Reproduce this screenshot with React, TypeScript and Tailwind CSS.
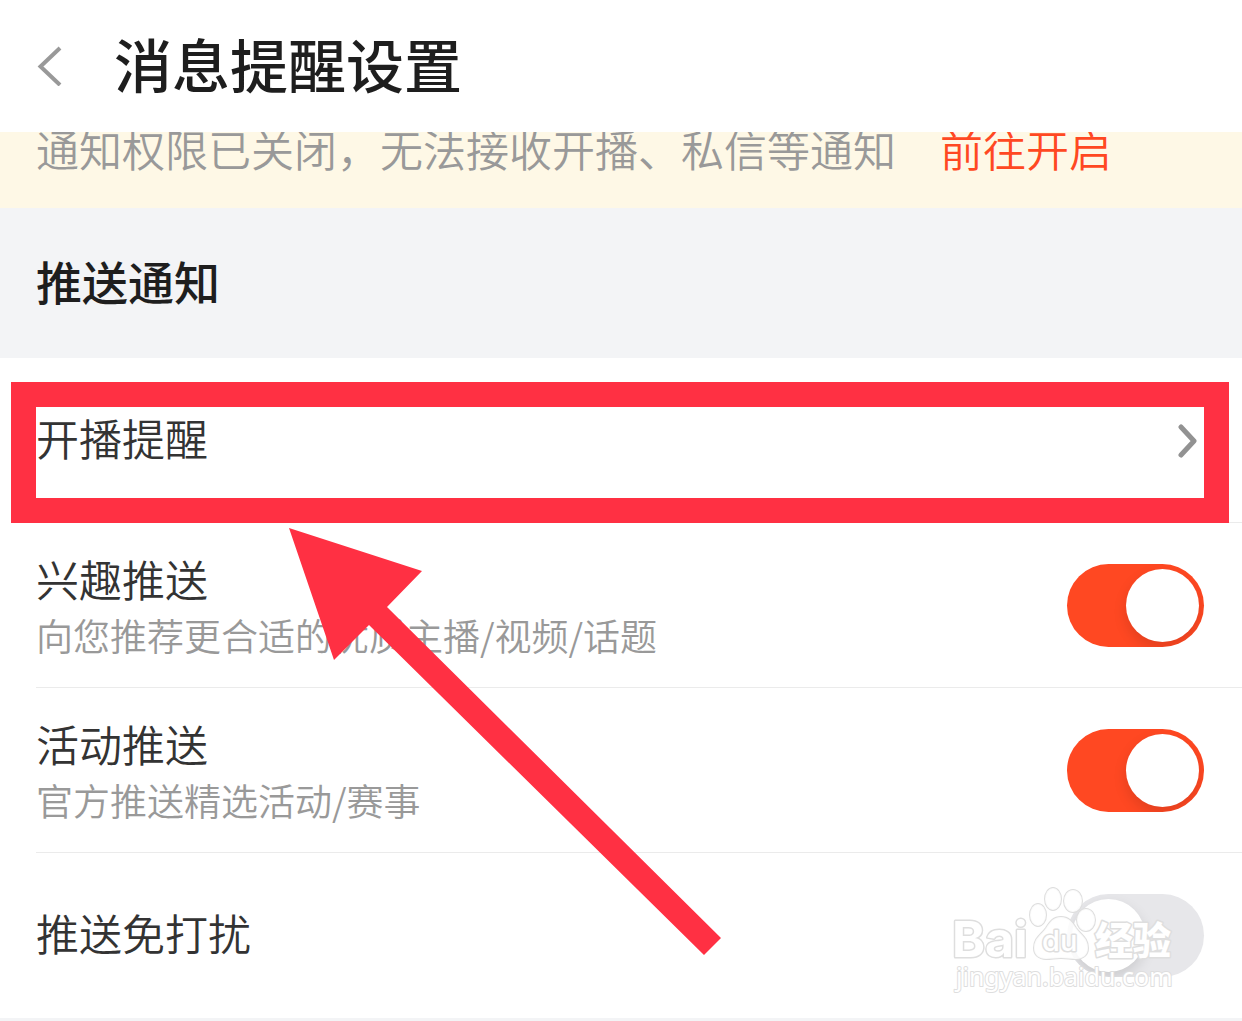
import { useState } from 'react';

interface PushSetting {
    id: string;
    title: string;
    desc?: string;
    enabled: boolean;
}

const initialSettings: PushSetting[] = [
    { id: 'interest', title: '兴趣推送', desc: '向您推荐更合适的优质主播/视频/话题', enabled: true },
    { id: 'activity', title: '活动推送', desc: '官方推送精选活动/赛事', enabled: true },
    { id: 'quiet', title: '推送免打扰', enabled: false },
];

const Header = () => (
    <header className="flex h-[132px] items-center bg-white pl-9">
        <button type="button" aria-label="返回" className="flex w-[78px] items-center">
            <svg width="28" height="40" viewBox="0 0 28 40" fill="none" stroke="#999" strokeWidth="4">
                <path d="M24 2 4.500 20.500 24 39" />
            </svg>
        </button>
        <h1 className="pb-1.5 text-[58px] leading-[80px] font-medium text-[#1e1e1e]">消息提醒设置</h1>
    </header>
);

const PermissionBanner = () => (
    <div className="flex h-[76px] items-end gap-11 overflow-hidden bg-[#fef8e6] pb-[30px] pl-9 text-[43px] leading-[60px] font-[350] whitespace-nowrap">
        <p className="text-[#999]">通知权限已关闭，无法接收开播、私信等通知</p>
        <a href="#permission" className="text-[#ff4822]">前往开启</a>
    </div>
);

interface SwitchProps {
    id: string;
    checked: boolean;
    onChange: () => void;
}

const Switch = ({ id, checked, onChange }: SwitchProps) => (
    <input
        id={id}
        type="checkbox"
        role="switch"
        checked={checked}
        onChange={onChange}
        className="flex h-[83px] w-[137px] shrink-0 appearance-none items-center overflow-hidden rounded-full bg-[#e7e7ea] px-[5px] before:size-[73px] before:rounded-full before:bg-white before:shadow-[0_6px_14px_rgba(0,0,0,0.12)] checked:justify-end checked:bg-[#ff4822]"
    />
);

const Arrow = () => (
    <svg
        className="pointer-events-none absolute top-[170px] left-[289px] z-10"
        width="432"
        height="428"
        viewBox="0 0 432 428"
        fill="#ff3043"
    >
        <path d="M0 0 133 43 98 79 432 410 415 427 80 97 45 132Z" />
    </svg>
);

const Watermark = () => (
    <svg
        className="pointer-events-none absolute top-7 right-[60px]"
        width="234"
        height="120"
        viewBox="0 0 234 120"
        fill="#fff"
        stroke="#dedede"
        strokeWidth="3"
        paintOrder="stroke"
        strokeLinejoin="round"
    >
        <g fillOpacity="0.85" strokeWidth="2">
            <ellipse cx="90" cy="34" rx="8" ry="11" />
            <ellipse cx="105" cy="18" rx="8" ry="11" />
            <ellipse cx="125" cy="20" rx="9" ry="11" />
            <ellipse cx="138" cy="39" rx="9" ry="11" />
            <path d="M113 36c-8 0-11 5-15 11-5 7-12 10-12 20 0 7 5 11 12 11 6 0 9-1 15-1s9 1 15 1c7 0 12-4 12-11 0-10-7-13-12-20-4-6-7-11-15-11Z" />
        </g>
        <text x="4" y="76" fontFamily="Inter, sans-serif" fontSize="50" fontWeight="700">Bai</text>
        <text x="94" y="70" fontFamily="Inter, sans-serif" fontSize="29" fontWeight="500">du</text>
        <text x="147" y="73" fontFamily="'Noto Sans CJK SC', sans-serif" fontSize="38" fontWeight="900">经验</text>
        <text x="8" y="105" fontFamily="'Noto Sans', sans-serif" fontSize="25" strokeWidth="2">jingyan.baidu.com</text>
    </svg>
);

const App = () => {
    const [settings, setSettings] = useState(initialSettings);

    const toggle = (id: string) => {
        setSettings(settings.map((item) => (item.id === id ? { ...item, enabled: !item.enabled } : item)));
    };

    return (
        <div className="flex min-h-screen flex-col overflow-x-hidden bg-[#f3f4f6] font-['Noto_Sans_CJK_SC',sans-serif]">
            <Header />
            <PermissionBanner />
            <h2 className="flex h-[150px] items-center pb-1.5 pl-9 text-[46px] font-medium text-[#1e1e1e]">推送通知</h2>

            <main className="relative bg-white">
                <ul className="pl-9 font-[350] text-[#333]">
                    <li className="h-[165px] border-b border-[#ebebeb]">
                        <button type="button" className="flex h-full w-full items-center justify-between pr-11 text-left text-[43px]">
                            <span className="pb-1.5">开播提醒</span>
                            <svg width="20" height="36" viewBox="0 0 20 36" fill="none" stroke="#929292" strokeWidth="5" strokeLinecap="round" strokeLinejoin="round">
                                <path d="M3 5 16 19 3 33" />
                            </svg>
                        </button>
                    </li>
                    {settings.map((item) => (
                        <li
                            key={item.id}
                            className="flex h-[165px] items-center justify-between border-b border-[#ebebeb] pr-[38px] last:border-transparent"
                        >
                            <label htmlFor={item.id} className={item.desc ? 'pt-0.5' : 'pb-1.5'}>
                                <span className="block text-[43px] leading-[58px]">{item.title}</span>
                                {item.desc && <span className="block text-[37px] leading-[56px] text-[#999]">{item.desc}</span>}
                            </label>
                            <Switch id={item.id} checked={item.enabled} onChange={() => toggle(item.id)} />
                        </li>
                    ))}
                </ul>

                {/* highlight around the first row */}
                <div className="pointer-events-none absolute top-6 right-[13px] left-[11px] h-[141px] border-[25px] border-[#ff3043]" />
                <Arrow />
                <div className="absolute right-0 bottom-0 h-[165px]">
                    <Watermark />
                </div>
            </main>
        </div>
    );
};

export default App;
